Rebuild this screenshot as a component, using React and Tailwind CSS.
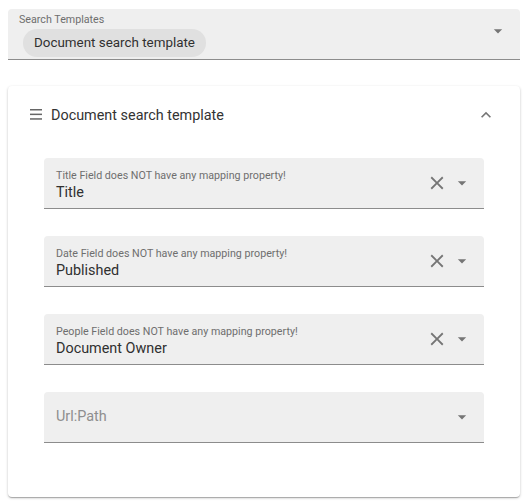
// App.jsx
// Search template picker with field-mapping selects (filled inputs)

const ArrowDrop = () => (
  <svg width="20" height="20" viewBox="0 0 24 24" fill="#757575">
    <path d="M7 10l5 5 5-5z" />
  </svg>
);

const ClearIcon = () => (
  <svg width="22" height="22" viewBox="0 0 24 24" fill="#757575">
    <path d="M19 6.41L17.59 5 12 10.59 6.41 5 5 6.41 10.59 12 5 17.59 6.41 19 12 13.41 17.59 19 19 17.59 13.41 12z" />
  </svg>
);

const fields = [
  { label: 'Title Field does NOT have any mapping property!', value: 'Title' },
  { label: 'Date Field does NOT have any mapping property!', value: 'Published' },
  { label: 'People Field does NOT have any mapping property!', value: 'Document Owner' },
  { label: null, value: 'Url:Path' }
];

const MappingField = ({ label, value }) => (
  <div className="flex items-center h-[51px] pl-3 pr-[12px] bg-[#efefef] rounded-t border-b border-[#8c8c8c]">
    {label ? (
      <div className="flex-1 min-w-0 self-stretch pt-[11px]">
        <p className="text-[10.7px] leading-[13px] text-[#6e6e6e]">{label}</p>
        <p className="mt-[1px] text-[14.4px] leading-[20px] text-[#303030]">{value}</p>
      </div>
    ) : (
      <div className="flex-1 min-w-0">
        <p className="text-[14.4px] leading-[20px] text-[#8e8e8e]">{value}</p>
      </div>
    )}
    {label && (
      <div className="mr-[4px] flex items-center">
        <ClearIcon />
      </div>
    )}
    <ArrowDrop />
  </div>
);

export default function App() {
  return (
    <div className="w-[528px] h-[503px] bg-white px-2 pt-[9px] overflow-hidden"
         style={{ fontFamily: 'Roboto, "Liberation Sans", sans-serif' }}>

      {/* Search templates select */}
      <div className="flex items-center h-[51px] pl-[11px] pr-[12px] bg-[#efefef] rounded-t border-b border-[#8c8c8c]">
        <div className="flex-1 self-stretch pt-[4px]">
          <p className="text-[10.7px] leading-[13px] text-[#6e6e6e]">Search Templates</p>
          <span className="inline-flex items-center h-[28px] mt-[3px] ml-1 px-[11px] rounded-full bg-[#e0e0e0] text-[13.4px] text-[#303030]">
            Document search template
          </span>
        </div>
        <div className="-mt-[6px]">
          <ArrowDrop />
        </div>
      </div>

      {/* Template card */}
      <div className="mt-[26px] h-[411px] bg-white rounded shadow-[0_1px_3px_rgba(0,0,0,0.2),0_1px_1px_rgba(0,0,0,0.14),0_2px_1px_-1px_rgba(0,0,0,0.12)]">
        <div className="flex items-center h-[58px] pl-[22px] pr-[24px]">
          <svg width="12" height="11" viewBox="0 0 12 11" fill="#666" className="mt-[-1px]">
            <rect x="0" y="0" width="12" height="1.5" />
            <rect x="0" y="4.6" width="12" height="1.5" />
            <rect x="0" y="9.2" width="12" height="1.5" />
          </svg>
          <span className="ml-[9px] flex-1 text-[14.4px] text-[#333] pt-[1px]">Document search template</span>
          <svg width="20" height="20" viewBox="0 0 24 24" fill="#757575">
            <path d="M12 8l-6 6 1.41 1.41L12 10.83l4.59 4.58L18 14z" />
          </svg>
        </div>

        <div className="flex flex-col gap-[27px] px-9 pt-[14px]">
          {fields.map((f) => (
            <MappingField key={f.value} label={f.label} value={f.value} />
          ))}
        </div>
      </div>
    </div>
  );
}
